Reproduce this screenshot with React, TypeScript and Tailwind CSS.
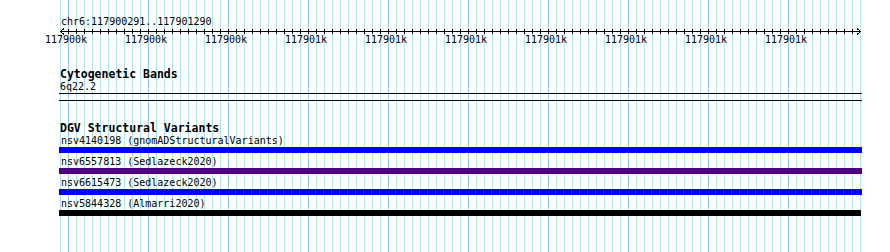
const MONO = "font-['DejaVu_Sans_Mono','Liberation_Mono',monospace]";

const AXIS_LABELS = [
  "117900k",
  "117900k",
  "117900k",
  "117901k",
  "117901k",
  "117901k",
  "117901k",
  "117901k",
  "117901k",
  "117901k",
];

const FEATURES = [
  { id: "nsv4140198", label: "nsv4140198 (gnomADStructuralVariants)", bar: "bg-[#0000ff] w-[803px]" },
  { id: "nsv6557813", label: "nsv6557813 (Sedlazeck2020)", bar: "bg-[#4b0082] w-[803px]" },
  { id: "nsv6615473", label: "nsv6615473 (Sedlazeck2020)", bar: "bg-[#0000ff] w-[803px]" },
  { id: "nsv5844328", label: "nsv5844328 (Almarri2020)", bar: "bg-black w-[802px]" },
];

// 101 vertical guide lines, 8px apart; every 10th is a major line
function GridLines() {
  return (
    <div className="absolute inset-y-0 left-[60px] flex">
      {Array.from({ length: 100 }, (_, i) => (
        <div
          key={i}
          className={
            i % 10 === 1
              ? "h-full w-[8px] border-l border-[#98c8e8]"
              : "h-full w-[8px] border-l border-[#b0e5eb]"
          }
        />
      ))}
      <div className="h-full w-px bg-[#b0e5eb]" />
    </div>
  );
}

function Axis() {
  const ticks = Array.from({ length: 99 }, (_, i) => (i + 1) * 8 + 0.5);
  return (
    <svg width={802} height={7} className="ml-px block overflow-visible" shapeRendering="crispEdges">
      <line x1={0} y1={4.5} x2={801} y2={4.5} stroke="#000" strokeWidth={1} />
      {ticks.map((x) => (
        <line key={x} x1={x} y1={2} x2={x} y2={7} stroke="#000" strokeWidth={1} />
      ))}
      <polyline points="4,1.5 0.5,4.5 4,7.5" fill="none" stroke="#000" strokeWidth={1} />
      <polyline points="797,1.5 800.5,4.5 797,7.5" fill="none" stroke="#000" strokeWidth={1} />
    </svg>
  );
}

export default function App() {
  return (
    <div className={`relative h-[252px] w-[890px] overflow-hidden bg-white text-black ${MONO}`}>
      <GridLines />

      <div className="relative z-10 flex flex-col pl-[59px]">
        {/* Ruler */}
        <section className="flex flex-col pt-[16px]">
          <p className="pl-[2px] text-[10px] leading-[11px]">chr6:117900291..117901290</p>
          <Axis />
          <div className="-ml-[33px] flex">
            {AXIS_LABELS.map((t, i) => (
              <span key={i} className="w-[80px] text-center text-[10px] leading-[11px]">
                {t}
              </span>
            ))}
          </div>
        </section>

        {/* Cytogenetic bands */}
        <section className="mt-[23px] flex flex-col">
          <h2 className="pl-px text-[11.5px] font-bold leading-[12px]">Cytogenetic Bands</h2>
          <p className="mt-px pl-px text-[10px] leading-[11px]">6q22.2</p>
          <div className="mt-px h-[8px] w-[803px] border-y border-black" />
        </section>

        {/* Structural variants */}
        <section className="mt-[21px] flex flex-col">
          <h2 className="pl-px text-[11.5px] font-bold leading-[12px]">DGV Structural Variants</h2>
          {FEATURES.map((f, i) => (
            <div key={f.id} className={i === 0 ? "flex flex-col" : "mt-[2px] flex flex-col"}>
              <p className="mt-px pl-[2px] text-[10px] leading-[11px]">{f.label}</p>
              <div className={`mt-px h-[6px] ${f.bar}`} />
            </div>
          ))}
        </section>
      </div>
    </div>
  );
}
